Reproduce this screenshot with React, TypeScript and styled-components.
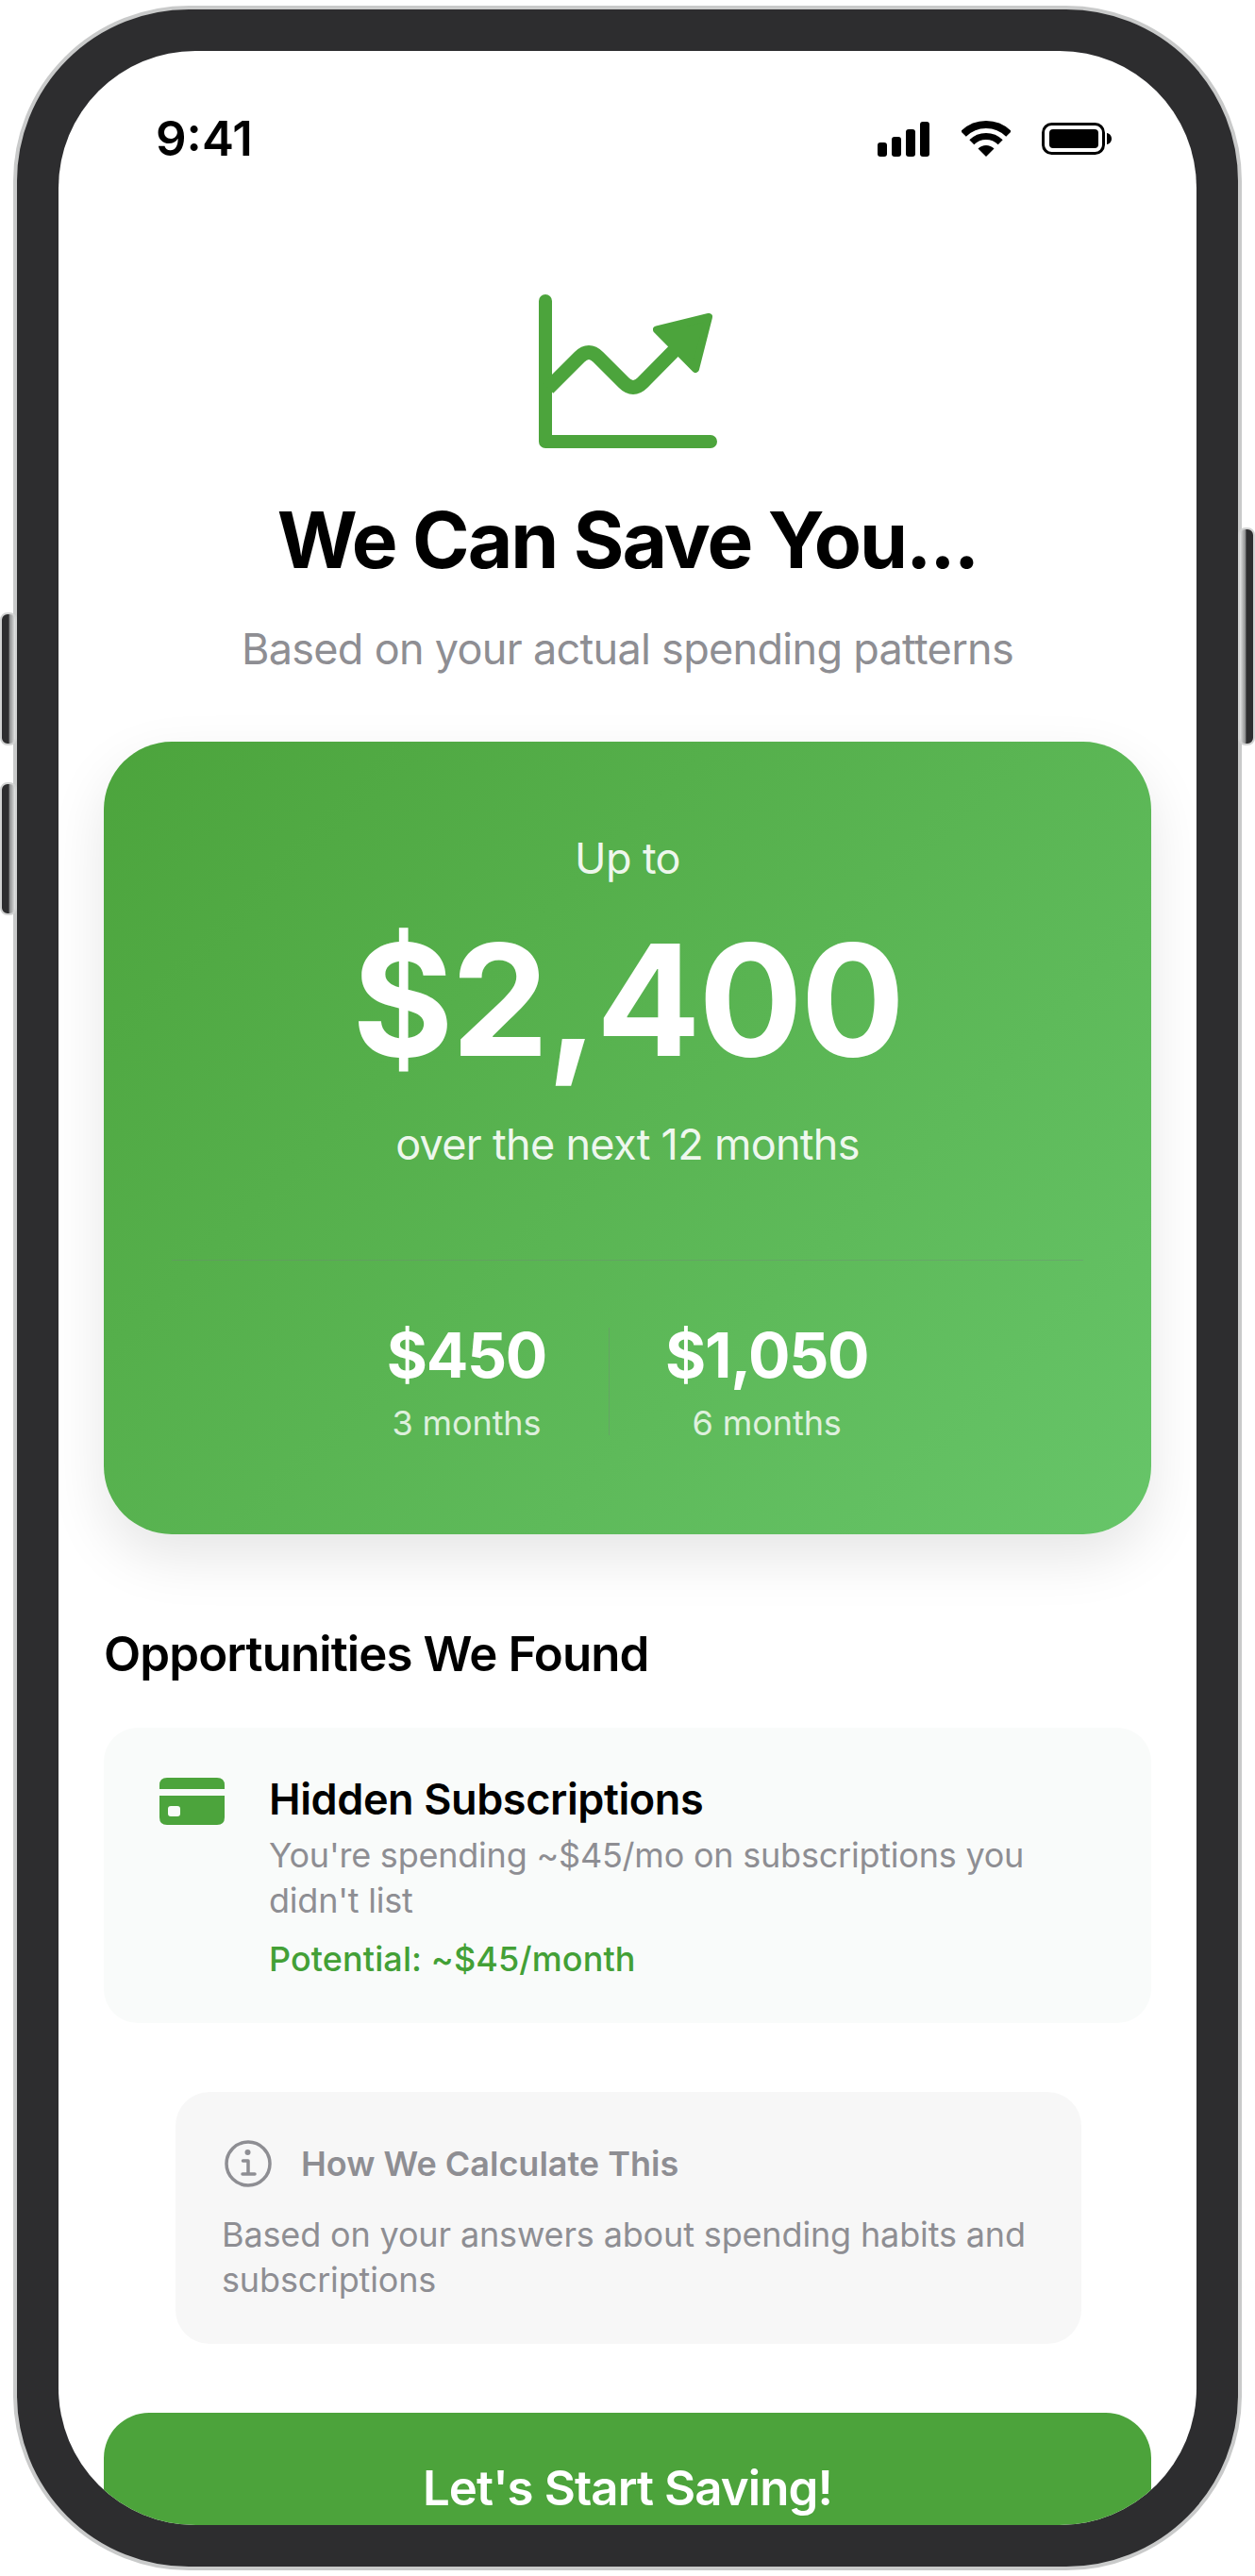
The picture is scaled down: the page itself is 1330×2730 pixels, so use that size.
import React from "react";
import styled, { createGlobalStyle } from "styled-components";

const Global = createGlobalStyle`
  html, body { margin: 0; padding: 0; background: #fff; }
  body { font-family: Inter, "Liberation Sans", sans-serif; }
  * { box-sizing: border-box; }
`;

const Stage = styled.div`
  position: relative;
  width: 1330px;
  height: 2730px;
  padding: 6px 14px;
  background: #fff;
`;

const Frame = styled.div`
  width: 1302px;
  height: 2718px;
  padding: 44px;
  border: 4px solid #c9caca;
  border-radius: 186px;
  background: #2d2d2f;
`;

const SideButton = styled.div<{ $side: "left" | "right"; $top: number; $height: number }>`
  position: absolute;
  top: ${(p) => p.$top}px;
  ${(p) => p.$side}: 0;
  width: 18px;
  height: ${(p) => p.$height}px;
  border: 2px solid #d2d3d3;
  border-radius: 8px;
  background: ${(p) =>
    p.$side === "left"
      ? "linear-gradient(90deg, #2d2d2f 0 50%, #8e8f90 60%, #e4e5e5 100%)"
      : "linear-gradient(270deg, #2d2d2f 0 50%, #8e8f90 60%, #e4e5e5 100%)"};
`;

const Screen = styled.div`
  height: 2622px;
  background: #fff;
  border-radius: 145px;
  overflow: hidden;
`;

const StatusBar = styled.div`
  height: 186px;
  padding: 0 90px 0 103px;
  display: flex;
  align-items: center;
  justify-content: space-between;
`;

const Time = styled.span`
  font-size: 51px;
  font-weight: 600;
  color: #000;
  line-height: 60px;
`;

const StatusIcons = styled.div`
  display: flex;
  align-items: center;
  gap: 33px;
`;

const Content = styled.div`
  padding: 72px 48px 0;
  display: flex;
  flex-direction: column;
`;

const ChartIcon = styled.svg`
  align-self: center;
  display: block;
  flex: none;
`;

const Title = styled.h1`
  margin: 48px 0 0;
  font-size: 82px;
  line-height: 100px;
  font-weight: 700;
  letter-spacing: -2px;
  color: #000;
  text-align: center;
`;

const Subtitle = styled.p`
  margin: 35px 0 0;
  font-size: 45px;
  line-height: 60px;
  font-weight: 400;
  letter-spacing: -0.7px;
  color: #8e8e93;
  text-align: center;
`;

const HeroCard = styled.div`
  margin-top: 68px;
  height: 840px;
  padding: 94px 72px 0;
  border-radius: 72px;
  background: linear-gradient(135deg, #4ca43c 0%, #67c569 100%);
  box-shadow: 0 24px 60px rgba(0, 0, 0, 0.1);
  color: #fff;
  text-align: center;
`;

const UpTo = styled.div`
  font-size: 45px;
  line-height: 60px;
  letter-spacing: -0.6px;
  opacity: 0.9;
`;

const Amount = styled.div`
  margin-top: 20px;
  font-size: 164px;
  line-height: 200px;
  font-weight: 700;
  letter-spacing: -2.3px;
`;

const Period = styled.div`
  margin-top: 23px;
  font-size: 45px;
  line-height: 60px;
  letter-spacing: -0.7px;
  opacity: 0.9;
`;

const HeroDivider = styled.div`
  margin-top: 92px;
  height: 1px;
  background: rgba(120, 120, 128, 0.3);
`;

const Stats = styled.div`
  margin-top: 55px;
  display: flex;
  justify-content: center;
`;

const Stat = styled.div`
  display: flex;
  flex-direction: column;
  align-items: center;
`;

const StatValue = styled.div`
  font-size: 66px;
  line-height: 90px;
  font-weight: 700;
  letter-spacing: -1.3px;
`;

const StatLabel = styled.div`
  margin-top: 2px;
  font-size: 36px;
  line-height: 50px;
  letter-spacing: -0.1px;
  opacity: 0.8;
`;

const StatSeparator = styled.div`
  width: 1px;
  margin: 16px 59px 12px 66px;
  background: rgba(120, 120, 128, 0.3);
`;

const SectionTitle = styled.h2`
  margin: 92px 0 0;
  font-size: 51px;
  line-height: 70px;
  font-weight: 600;
  letter-spacing: -0.9px;
  color: #000;
`;

const OpportunityCard = styled.div`
  margin-top: 43px;
  height: 313px;
  padding: 46px 48px 0 59px;
  border-radius: 36px;
  background: #f9fbfa;
  display: flex;
  gap: 47px;
`;

const CardIcon = styled.svg`
  display: block;
  flex: none;
  margin-top: 7px;
`;

const OpportunityBody = styled.div`
  display: flex;
  flex-direction: column;
`;

const OpportunityTitle = styled.div`
  font-size: 45px;
  line-height: 60px;
  font-weight: 600;
  letter-spacing: -0.4px;
  color: #000;
`;

const OpportunityText = styled.div`
  margin-top: 5px;
  font-size: 36px;
  line-height: 48px;
  letter-spacing: -0.22px;
  color: #8e8e93;
`;

const Potential = styled.div`
  margin-top: 14px;
  font-size: 36px;
  line-height: 48px;
  font-weight: 500;
  letter-spacing: 0.1px;
  color: #43a036;
`;

const InfoBox = styled.div`
  margin: 73px 74px 0 76px;
  height: 267px;
  padding: 46px 48px 0 49px;
  border-radius: 36px;
  background: #f7f7f7;
`;

const InfoHeader = styled.div`
  display: flex;
  align-items: center;
  gap: 31px;
  height: 60px;
  padding-left: 3px;
`;

const InfoHeading = styled.div`
  font-size: 36px;
  line-height: 60px;
  font-weight: 600;
  color: #8e8e93;
`;

const InfoText = styled.div`
  margin-top: 21px;
  font-size: 36px;
  line-height: 48px;
  letter-spacing: -0.15px;
  color: #8e8e93;
`;

const CTA = styled.button`
  display: block;
  width: 100%;
  flex: none;
  margin-top: 73px;
  height: 158px;
  border: 0;
  border-radius: 48px;
  background: #4ca33b;
  color: #fff;
  font-family: inherit;
  font-size: 51px;
  font-weight: 600;
  letter-spacing: -0.9px;
`;

export default function App() {
  return (
    <Stage>
      <Global />
      <SideButton $side="left" $top={649} $height={141} />
      <SideButton $side="left" $top={829} $height={141} />
      <SideButton $side="right" $top={559} $height={231} />
      <Frame>
        <Screen>
          <StatusBar>
            <Time>9:41</Time>
            <StatusIcons>
              <svg width="56" height="37" viewBox="0 0 56 37">
                <rect x="0" y="22" width="10" height="15" rx="3" fill="#000" />
                <rect x="15" y="16" width="10" height="21" rx="3" fill="#000" />
                <rect x="30" y="8" width="10" height="29" rx="3" fill="#000" />
                <rect x="45" y="0" width="10" height="37" rx="3" fill="#000" />
              </svg>
              <svg width="52" height="38" viewBox="0 0 52 38">
                <path d="M2 14A34 34 0 0 1 50 14" fill="none" stroke="#000" strokeWidth="8" />
                <path d="M10.8 22.8A21.5 21.5 0 0 1 41.2 22.8" fill="none" stroke="#000" strokeWidth="7" />
                <path d="M26 38L17.5 29.5A12 12 0 0 1 34.5 29.5Z" fill="#000" />
              </svg>
              <svg width="74" height="34" viewBox="0 0 74 34">
                <rect x="1.5" y="1.5" width="64" height="31" rx="9" fill="none" stroke="#000" strokeWidth="3" />
                <rect x="8" y="7" width="52" height="20" rx="4" fill="#000" />
                <path d="M69 11C72 11.5 74 14 74 17C74 20 72 22.500 69 23Z" fill="#000" />
              </svg>
            </StatusIcons>
          </StatusBar>
          <Content>
            <ChartIcon width="189" height="163" viewBox="0 0 189 163">
              <path d="M7 7V156H182" fill="none" stroke="#4ca43c" strokeWidth="14" strokeLinecap="round" strokeLinejoin="round" />
              <path d="M10 99.500L43 66.500Q53 56.500 63 66.500L90 93.500Q100 103.500 110 93.500L145 58" fill="none" stroke="#4ca43c" strokeWidth="15" />
              <path d="M180 24L125 37.500L166 79Z" fill="#4ca43c" stroke="#4ca43c" strokeWidth="8" strokeLinejoin="round" />
            </ChartIcon>
            <Title>We Can Save You...</Title>
            <Subtitle>Based on your actual spending patterns</Subtitle>
            <HeroCard>
              <UpTo>Up to</UpTo>
              <Amount>$2,400</Amount>
              <Period>over the next 12 months</Period>
              <HeroDivider />
              <Stats>
                <Stat>
                  <StatValue>$450</StatValue>
                  <StatLabel>3 months</StatLabel>
                </Stat>
                <StatSeparator />
                <Stat>
                  <StatValue>$1,050</StatValue>
                  <StatLabel>6 months</StatLabel>
                </Stat>
              </Stats>
            </HeroCard>
            <SectionTitle>Opportunities We Found</SectionTitle>
            <OpportunityCard>
              <CardIcon width="69" height="50" viewBox="0 0 69 50">
                <path d="M0 12V8Q0 0 8 0H61Q69 0 69 8V12Z" fill="#4ca43c" />
                <path fillRule="evenodd" d="M0 19H69V42Q69 50 61 50H8Q0 50 0 42ZM12 30Q9 30 9 33V38Q9 41 12 41H19Q22 41 22 38V33Q22 30 19 30Z" fill="#4ca43c" />
              </CardIcon>
              <OpportunityBody>
                <OpportunityTitle>Hidden Subscriptions</OpportunityTitle>
                <OpportunityText>You're spending ~$45/mo on subscriptions you didn't list</OpportunityText>
                <Potential>Potential: ~$45/month</Potential>
              </OpportunityBody>
            </OpportunityCard>
            <InfoBox>
              <InfoHeader>
                <svg width="50" height="50" viewBox="0 0 50 50">
                  <circle cx="25" cy="25" r="23" fill="none" stroke="#8e8e93" strokeWidth="3.5" />
                  <circle cx="24.500" cy="13" r="3" fill="#8e8e93" />
                  <path d="M19.500 22H25V36M19 36H32" fill="none" stroke="#8e8e93" strokeWidth="3.5" strokeLinecap="round" strokeLinejoin="round" />
                </svg>
                <InfoHeading>How We Calculate This</InfoHeading>
              </InfoHeader>
              <InfoText>Based on your answers about spending habits and subscriptions</InfoText>
            </InfoBox>
            <CTA>Let's Start Saving!</CTA>
          </Content>
        </Screen>
      </Frame>
    </Stage>
  );
}
